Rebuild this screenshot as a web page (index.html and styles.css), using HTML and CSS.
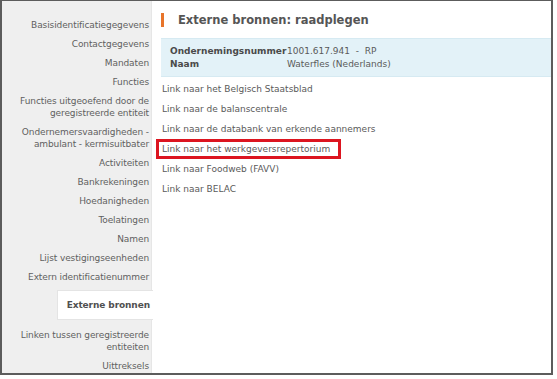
FILE: index.html
```html
<!DOCTYPE html>
<html lang="nl">
<head>
    <meta charset="UTF-8">
    <meta name="viewport" content="width=device-width, initial-scale=1.0">
    <title>Externe bronnen: raadplegen</title>
    <link rel="stylesheet" href="styles.css">
</head>
<body>
    <div class="frame">
        <nav class="sidebar">
            <div class="nav-item">Basisidentificatiegegevens</div>
            <div class="nav-item">Contactgegevens</div>
            <div class="nav-item">Mandaten</div>
            <div class="nav-item">Functies</div>
            <div class="nav-item">Functies uitgeoefend door de<br>geregistreerde entiteit</div>
            <div class="nav-item">Ondernemersvaardigheden -<br>ambulant - kermisuitbater</div>
            <div class="nav-item">Activiteiten</div>
            <div class="nav-item">Bankrekeningen</div>
            <div class="nav-item">Hoedanigheden</div>
            <div class="nav-item">Toelatingen</div>
            <div class="nav-item">Namen</div>
            <div class="nav-item">Lijst vestigingseenheden</div>
            <div class="nav-item">Extern identificatienummer</div>
            <div class="nav-item active">Externe bronnen</div>
            <div class="nav-item">Linken tussen geregistreerde<br>entiteiten</div>
            <div class="nav-item">Uittreksels</div>
        </nav>

        <main class="content">
            <h1 class="page-title">Externe bronnen: raadplegen</h1>

            <div class="info-box">
                <div class="info-row">
                    <span class="info-label">Ondernemingsnummer</span>
                    <span class="info-value">1001.617.941 &nbsp;- &nbsp;RP</span>
                </div>
                <div class="info-row">
                    <span class="info-label">Naam</span>
                    <span class="info-value">Waterfles (Nederlands)</span>
                </div>
            </div>

            <ul class="link-list">
                <li><a href="#">Link naar het Belgisch Staatsblad</a></li>
                <li><a href="#">Link naar de balanscentrale</a></li>
                <li><a href="#">Link naar de databank van erkende aannemers</a></li>
                <li class="highlight"><a href="#">Link naar het werkgeversrepertorium</a></li>
                <li><a href="#">Link naar Foodweb (FAVV)</a></li>
                <li><a href="#">Link naar BELAC</a></li>
            </ul>
        </main>
    </div>
</body>
</html>
```

FILE: styles.css
```css
body {
    margin: 0;
    background-color: white;
    font-family: "DejaVu Sans", Verdana, sans-serif;
    font-size: 9px;
    color: #5a5a5a;
}
.frame {
    display: flex;
    width: 553px;
    height: 375px;
    box-sizing: border-box;
    border: 2px solid #5c5c5c;
    border-top-width: 1px;
    background-color: white;
    overflow: hidden;
}
.sidebar {
    width: 150px;
    flex-shrink: 0;
    background-color: #efefef;
    border-right: 1px solid #e6e6e6;
    padding-top: 14px;
    box-sizing: border-box;
}
.nav-item {
    text-align: right;
    white-space: nowrap;
    letter-spacing: -0.1px;
    line-height: 12px;
    padding: 3.5px 2px 3.5px 0;
    color: #5f5f5f;
}
.nav-item.active {
    margin: 4px -2px 5px 55px;
    padding: 8px 3px 8px 0;
    background-color: white;
    border: 1px solid #e4e4e4;
    border-right: none;
    font-weight: bold;
    color: #505050;
}
.content {
    flex: 1;
    padding: 12px 0 0 9px;
}
.page-title {
    margin: 0 0 11px 0;
    padding-left: 14px;
    border-left: 3px solid #e8742a;
    font-size: 11.5px;
    line-height: 14px;
    font-weight: bold;
    color: #555;
}
.info-box {
    background-color: #e3f2f8;
    border-top: 1px solid #d6eaf2;
    border-bottom: 1px solid #d6eaf2;
    padding: 6px 0 5px 9px;
    margin-right: -2px;
}
.info-row {
    display: flex;
    line-height: 13px;
}
.info-label {
    width: 117px;
    font-weight: bold;
    color: #4a4a4a;
}
.info-value {
    color: #5a5a5a;
}
.link-list {
    list-style: none;
    margin: 2px 0 0 0;
    padding: 0;
}
.link-list li {
    line-height: 14px;
    padding: 3px 0 3px 1px;
}
.link-list a {
    color: #5a5a5a;
    text-decoration: none;
}
.link-list li.highlight {
    width: 176px;
    margin-left: -5px;
    padding: 0 0 0 3px;
    border: 3px solid #dc1520;
}
```
